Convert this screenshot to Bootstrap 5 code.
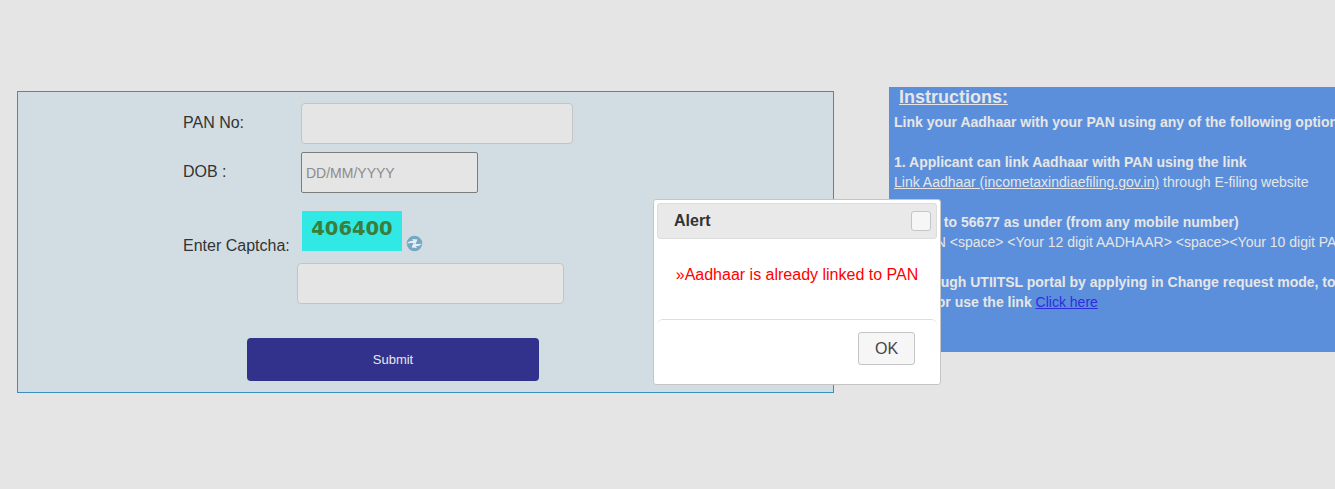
<!DOCTYPE html>
<html lang="en">
  <head>
    <meta charset="UTF-8" />
    <meta name="viewport" content="width=device-width, initial-scale=1" />
    <title>Link Aadhaar</title>
    <link
      href="https://cdn.jsdelivr.net/npm/bootstrap@5.3.0/dist/css/bootstrap.min.css"
      rel="stylesheet"
    />
    <style>
      body {
        background: #e5e5e5;
        font-family: "Liberation Sans", Arial, sans-serif;
        font-size: 16px;
        color: #333;
        overflow: hidden;
      }
      .page-wrap {
        padding: 87px 0 0 17px;
        height: 489px;
      }
      .pan-panel {
        width: 817px;
        height: 302px;
        margin-top: 4px;
        padding: 11px 0 0 165px;
        background: #d2dde3;
        border: 1px solid #3a8fc0;
      }
      .field-label {
        width: 118px;
        line-height: 20px;
        padding-bottom: 2px;
      }
      .pan-panel .form-control {
        background: #e5e5e5;
        border: 1px solid #c4c4c4;
        border-radius: 4px;
        height: 41px;
      }
      .pan-input {
        width: 272px;
      }
      .pan-panel .form-control.dob-input {
        width: 177px;
        border-color: #7c7c7c;
        border-radius: 2px;
        padding: 0 4px;
        font-size: 14px;
      }
      .dob-input::placeholder {
        color: #8b8b8b;
        opacity: 1;
      }
      .captcha-row {
        margin-top: 18px;
        height: 40px;
      }
      .field-label.captcha-label {
        padding: 25px 0 0;
      }
      .captcha-box {
        width: 100px;
        height: 40px;
        margin-left: 1px;
        background: #30e8e4;
        color: #3b7d3c;
        font-family: "DejaVu Sans", sans-serif;
        font-weight: 700;
        font-size: 19.5px;
        line-height: 36px;
        text-align: center;
      }
      .refresh-icon {
        margin: 24px 0 0 4px;
      }
      .pan-panel .form-control.captcha-input {
        width: 267px;
        margin: 12px 0 0 114px;
      }
      .submit-btn {
        display: block;
        width: 292px;
        height: 43px;
        margin: 34px 0 0 64px;
        padding: 0;
        background: #32328c;
        border: 0;
        border-radius: 4px;
        color: #e8e8e8;
        font-size: 13px;
      }
      .info-panel {
        margin-left: 55px;
        width: 446px;
        flex: none;
        height: 265px;
        padding: 0 0 0 5px;
        background: #5b8fdc;
        color: #e6e6e6;
        font-size: 14px;
        line-height: 20px;
        white-space: nowrap;
        overflow: hidden;
      }
      .info-title {
        margin: 0 0 6px 5px;
        padding-top: 1px;
        font-size: 18px;
        line-height: 18px;
        font-weight: 700;
        text-decoration: underline;
      }
      .info-panel a {
        color: #e6e6e6;
      }
      .info-panel a.blue-link {
        color: #2d2dde;
      }
      .alert-box {
        position: absolute;
        left: 653px;
        top: 199px;
        width: 288px;
        height: 186px;
        padding: 3px;
        background: #fff;
        border: 1px solid #c5c5c5;
        border-radius: 3px;
      }
      .alert-head {
        height: 36px;
        padding: 0 5px 0 16px;
        background: #e9e9e9;
        border: 1px solid #ddd;
        border-radius: 3px;
        color: #333;
        font-weight: 700;
      }
      .close-box {
        width: 20px;
        height: 20px;
        padding: 0;
        background: #f6f6f6;
        border: 1px solid #c5c5c5;
        border-radius: 3px;
      }
      .alert-text {
        height: 80px;
        padding-top: 26px;
        color: #f00;
        text-align: center;
        line-height: 20px;
      }
      .alert-foot {
        padding: 12px 22px 0 0;
        border-top: 1px solid #ddd;
        border-radius: 6px 6px 0 0;
      }
      .ok-btn {
        width: 57px;
        height: 33px;
        padding: 0;
        background: #f6f6f6;
        border: 1px solid #c5c5c5;
        border-radius: 3px;
        color: #454545;
        font-size: 16px;
      }
    </style>
  </head>
  <body>
    <div class="page-wrap d-flex align-items-start">
      <!-- PAN form -->
      <form class="pan-panel flex-shrink-0">
        <div class="d-flex align-items-center mb-2">
          <label class="field-label" for="panNo">PAN No:</label>
          <input class="form-control pan-input" id="panNo" type="text" />
        </div>
        <div class="d-flex align-items-center">
          <label class="field-label" for="dob">DOB :</label>
          <input class="form-control dob-input" id="dob" type="text" placeholder="DD/MM/YYYY" />
        </div>
        <div class="d-flex captcha-row">
          <label class="field-label captcha-label" for="captcha">Enter Captcha:</label>
          <div class="captcha-box">406400</div>
          <svg class="refresh-icon" width="17" height="17" viewBox="0 0 17 17">
            <circle cx="8.500" cy="8.500" r="7.800" fill="#74a8c6" />
            <path d="M1 8.500C2.500 6.500 5 5.500 7.500 5.800L6 4 11.500 4.500 9.500 9C8.500 7.800 4 7.500 1 8.500z" fill="#e4eef3" />
            <path d="M16 8.500C14.500 10.500 12 11.500 9.500 11.200L11 13 5.500 12.500 7.500 8C8.500 9.200 13 9.500 16 8.500z" fill="#e4eef3" />
          </svg>
        </div>
        <input class="form-control captcha-input" id="captcha" type="text" />
        <button class="btn submit-btn" type="button">Submit</button>
      </form>

      <!-- Instructions -->
      <div class="info-panel">
        <div class="info-title">Instructions:</div>
        <div>
          <b>Link your Aadhaar with your PAN using any of the following options</b><br /><br />
          <b>1. Applicant can link Aadhaar with PAN using the link</b><br />
          <a href="#">Link Aadhaar (incometaxindiaefiling.gov.in)</a> through E-filing website<br /><br />
          <b>2. SMS to 56677 as under (from any mobile number)</b><br />
          UIDPAN &lt;space&gt; &lt;Your 12 digit AADHAAR&gt; &lt;space&gt;&lt;Your 10 digit PAN&gt;<br /><br />
          <b>3. Through UTIITSL portal by applying in Change request mode, to</b><br />
          <b>portal or use the link</b> <a class="blue-link" href="#">Click here</a>
        </div>
      </div>
    </div>

    <!-- Alert dialog -->
    <div class="alert-box" role="dialog">
      <div class="alert-head d-flex align-items-center justify-content-between">
        <span>Alert</span>
        <button class="close-box" type="button" aria-label="Close"></button>
      </div>
      <div class="alert-text">»Aadhaar is already linked to PAN</div>
      <div class="alert-foot d-flex justify-content-end">
        <button class="btn ok-btn" type="button">OK</button>
      </div>
    </div>
    <script src="https://cdn.jsdelivr.net/npm/bootstrap@5.3.0/dist/js/bootstrap.bundle.min.js"></script>
  </body>
</html>
